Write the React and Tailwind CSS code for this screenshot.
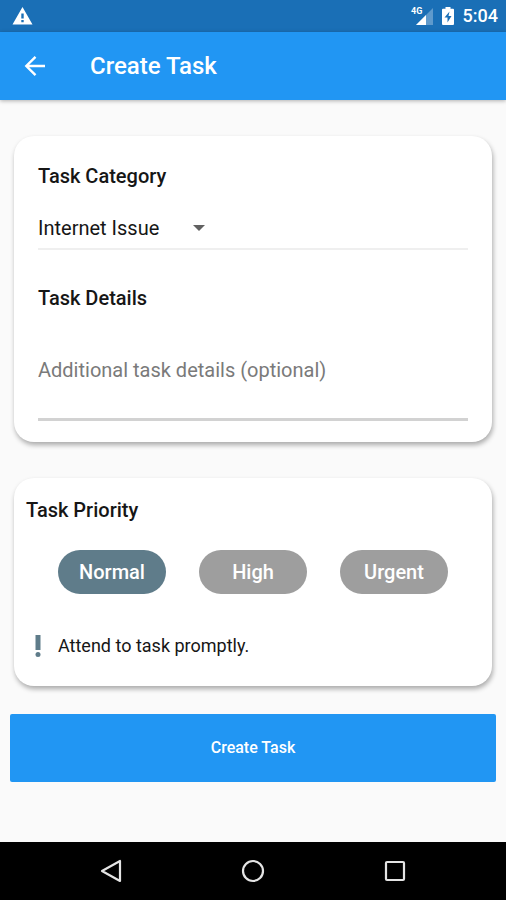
import { useState } from "react";

const priorities = [
  { name: "Normal", note: "Attend to task promptly." },
  { name: "High", note: "Attend to task within the hour." },
  { name: "Urgent", note: "Attend to task immediately." },
];

function StatusBar() {
  return (
    <div className="flex h-8 items-center justify-between bg-[#1a6fb6] pr-2 pl-3 text-white">
      <svg width="21" height="20" viewBox="0 0 21 20" fill="currentColor" aria-label="Warning">
        <path fillRule="evenodd" d="M10.5 1 20.5 18.5H.5zM9.3 7.5v5h2.4v-5zm0 6.5v2.3h2.4V14z" />
      </svg>
      <div className="flex items-center">
        <svg width="23" height="20" viewBox="0 0 23 20" aria-label="4G signal">
          <path d="M23 2v17H6z" fill="#fff" opacity="0.3" />
          <path d="M16 9v10H6z" fill="#fff" />
          <text x="1" y="8" fill="#fff" fontSize="9" fontWeight="700" fontFamily="Roboto, sans-serif">4G</text>
        </svg>
        <svg className="ml-2" width="14" height="20" viewBox="0 0 14 20" fill="currentColor" aria-label="Battery charging">
          <path
            fillRule="evenodd"
            d="M4.5 1h5v1.8H12q1 0 1 1V18q0 1-1 1H2q-1 0-1-1V3.800q0-1 1-1h2.500zM8.500 5.500 3.500 11.500h3v5l4-6.500h-3z"
          />
        </svg>
        <span className="ml-2 text-lg leading-8 font-medium">5:04</span>
      </div>
    </div>
  );
}

function AppBar() {
  return (
    <header className="z-10 flex h-[68px] items-center bg-[#2196f3] px-5 text-white shadow-[0_1px_4px_rgba(0,0,0,0.3)]">
      <button type="button" aria-label="Back" className="p-1">
        <svg width="22" height="22" viewBox="0 0 22 22" fill="none" stroke="currentColor" strokeWidth="2.400">
          <path d="M21 11H3M11.500 1.800 2.300 11l9.200 9.200" />
        </svg>
      </button>
      <h1 className="ml-10 text-2xl font-medium">Create Task</h1>
    </header>
  );
}

function Card({ className, children }) {
  return (
    <section className={`rounded-[20px] bg-white shadow-[1px_3px_5px_rgba(0,0,0,0.32)] ${className}`}>
      {children}
    </section>
  );
}

function NavBar() {
  return (
    <nav className="grid h-[58px] grid-cols-3 place-items-center bg-black px-10 text-[#e4e4e4]">
      <button type="button" aria-label="Back">
        <svg width="24" height="24" viewBox="0 0 24 24" fill="none" stroke="currentColor" strokeWidth="2.200" strokeLinejoin="round">
          <path d="M21 2v20L3 12z" />
        </svg>
      </button>
      <button type="button" aria-label="Home">
        <svg width="24" height="24" viewBox="0 0 24 24" fill="none" stroke="currentColor" strokeWidth="2.200">
          <circle cx="12" cy="12" r="10" />
        </svg>
      </button>
      <button type="button" aria-label="Recent apps">
        <svg width="24" height="24" viewBox="0 0 24 24" fill="none" stroke="currentColor" strokeWidth="2.200">
          <rect x="3" y="3" width="18" height="18" rx="1" />
        </svg>
      </button>
    </nav>
  );
}

export default function App() {
  const [category, setCategory] = useState("Internet Issue");
  const [details, setDetails] = useState("");
  const [priority, setPriority] = useState(priorities[0]);

  return (
    <div className="flex min-h-screen flex-col bg-[#fafafa] font-[Roboto,sans-serif] text-[#161616]">
      <StatusBar />
      <AppBar />

      <main className="flex-1 px-[10px] pt-9">
        <Card className="mx-1 px-6 pt-6 pb-[21px]">
          <label htmlFor="category" className="block text-xl leading-8 font-medium">
            Task Category
          </label>
          <div className="mt-5 flex items-center border-b-2 border-[#efefef] pb-1">
            <div className="relative w-[172px]">
              <select
                id="category"
                value={category}
                onChange={(e) => setCategory(e.target.value)}
                className="w-full appearance-none bg-transparent text-xl leading-8 outline-none"
              >
                <option>Internet Issue</option>
                <option>Power Issue</option>
                <option>Other</option>
              </select>
              <svg className="pointer-events-none absolute top-3 right-[5px]" width="12" height="8" viewBox="0 0 12 8" fill="#616161">
                <path d="M0 1h12L6 7z" />
              </svg>
            </div>
          </div>

          <label htmlFor="details" className="mt-8 block text-xl leading-8 font-medium">
            Task Details
          </label>
          <textarea
            id="details"
            rows={1}
            value={details}
            onChange={(e) => setDetails(e.target.value)}
            placeholder="Additional task details (optional)"
            className="mt-10 block w-full resize-none border-b-[3px] border-[#d2d2d2] pb-8 text-xl leading-8 outline-none placeholder:text-[#7a7a7a]"
          />
        </Card>

        <Card className="mx-1 mt-9 px-3 pt-4 pb-6">
          <h2 className="text-xl leading-8 font-medium">Task Priority</h2>
          <div className="mt-6 flex justify-center gap-[33px]">
            {priorities.map((p) => (
              <button
                key={p.name}
                type="button"
                aria-pressed={p.name === priority.name}
                onClick={() => setPriority(p)}
                className={`h-11 w-[108px] rounded-full text-xl font-medium text-white ${
                  p.name === priority.name ? "bg-[#5f7c8a]" : "bg-[#9e9e9e]"
                }`}
              >
                {p.name}
              </button>
            ))}
          </div>
          <div className="mt-9 flex items-center pl-2">
            <svg width="8" height="24" viewBox="0 0 8 24" fill="#5f7c8a">
              <path d="M1.500 1h5v15h-5z" />
              <circle cx="4" cy="20.500" r="2.500" />
            </svg>
            <p className="ml-4 text-lg leading-8">{priority.note}</p>
          </div>
        </Card>

        <button type="button" className="mt-7 h-[68px] w-full rounded-xs bg-[#2196f3] text-base font-medium text-white">
          Create Task
        </button>
      </main>

      <NavBar />
    </div>
  );
}
